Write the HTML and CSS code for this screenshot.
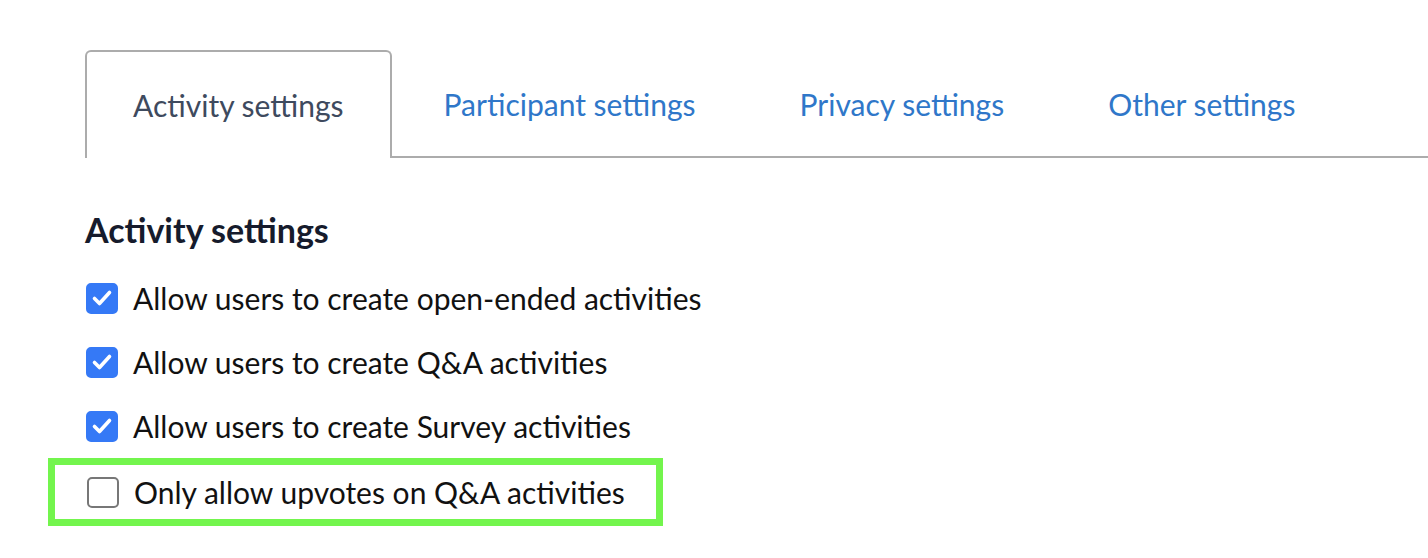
FILE: index.html
```html
<!DOCTYPE html>
<html lang="en">
<head>
    <meta charset="UTF-8">
    <meta name="viewport" content="width=device-width, initial-scale=1.0">
    <title>Settings</title>
    <link rel="stylesheet" href="styles.css">
</head>
<body>
    <div class="container">
        <ul class="tabs">
            <li class="tab active">Activity settings</li>
            <li class="tab">Participant settings</li>
            <li class="tab">Privacy settings</li>
            <li class="tab">Other settings</li>
        </ul>

        <section class="panel">
            <h2>Activity settings</h2>
            <label class="option">
                <span class="box checked">
                    <svg viewBox="0 0 24 24" width="24" height="24"><path d="M4.5 12.5l5 5 10-11" fill="none" stroke="#fff" stroke-width="3.6" stroke-linecap="round" stroke-linejoin="round"/></svg>
                </span>
                Allow users to create open-ended activities
            </label>
            <label class="option">
                <span class="box checked">
                    <svg viewBox="0 0 24 24" width="24" height="24"><path d="M4.5 12.5l5 5 10-11" fill="none" stroke="#fff" stroke-width="3.6" stroke-linecap="round" stroke-linejoin="round"/></svg>
                </span>
                Allow users to create Q&amp;A activities
            </label>
            <label class="option">
                <span class="box checked">
                    <svg viewBox="0 0 24 24" width="24" height="24"><path d="M4.5 12.5l5 5 10-11" fill="none" stroke="#fff" stroke-width="3.6" stroke-linecap="round" stroke-linejoin="round"/></svg>
                </span>
                Allow users to create Survey activities
            </label>
            <label class="option highlight">
                <span class="box"></span>
                Only allow upvotes on Q&amp;A activities
            </label>
        </section>
    </div>
</body>
</html>
```

FILE: styles.css
```css
* {
    box-sizing: border-box;
    margin: 0;
    padding: 0;
}
body {
    background-color: #ffffff;
    font-family: Lato, "Noto Sans", sans-serif;
    color: #111111;
}
.container {
    padding: 50px 0 0 85px;
}
.tabs {
    list-style: none;
    display: flex;
    border-bottom: 2px solid #acacac;
}
.tab {
    height: 106px;
    padding: 0 50px;
    display: flex;
    align-items: center;
    font-size: 30px;
    color: #2f77c9;
    border: 2px solid transparent;
    border-bottom: none;
    margin-bottom: -2px;
}
.tab.active {
    color: #3e4a5e;
    border-color: #acacac;
    border-radius: 6px 6px 0 0;
    background-color: #ffffff;
    height: 108px;
    padding: 0 46px;
}
.panel {
    padding-top: 51px;
}
h2 {
    font-size: 34px;
    font-weight: 700;
    color: #161b2c;
    margin-bottom: 16px;
}
.option {
    display: flex;
    align-items: center;
    gap: 15px;
    height: 64px;
    font-size: 30px;
}
.box {
    width: 32px;
    height: 31px;
    border-radius: 5px;
    border: 2px solid #777777;
    display: flex;
    align-items: center;
    justify-content: center;
    margin-left: 1px;
}
.box.checked {
    background-color: #3579f6;
    border-color: #3579f6;
}
.highlight {
    width: 615px;
    height: 68px;
    margin-left: -37px;
    padding-left: 31px;
    border: 7px solid #73f54d;
}
```
